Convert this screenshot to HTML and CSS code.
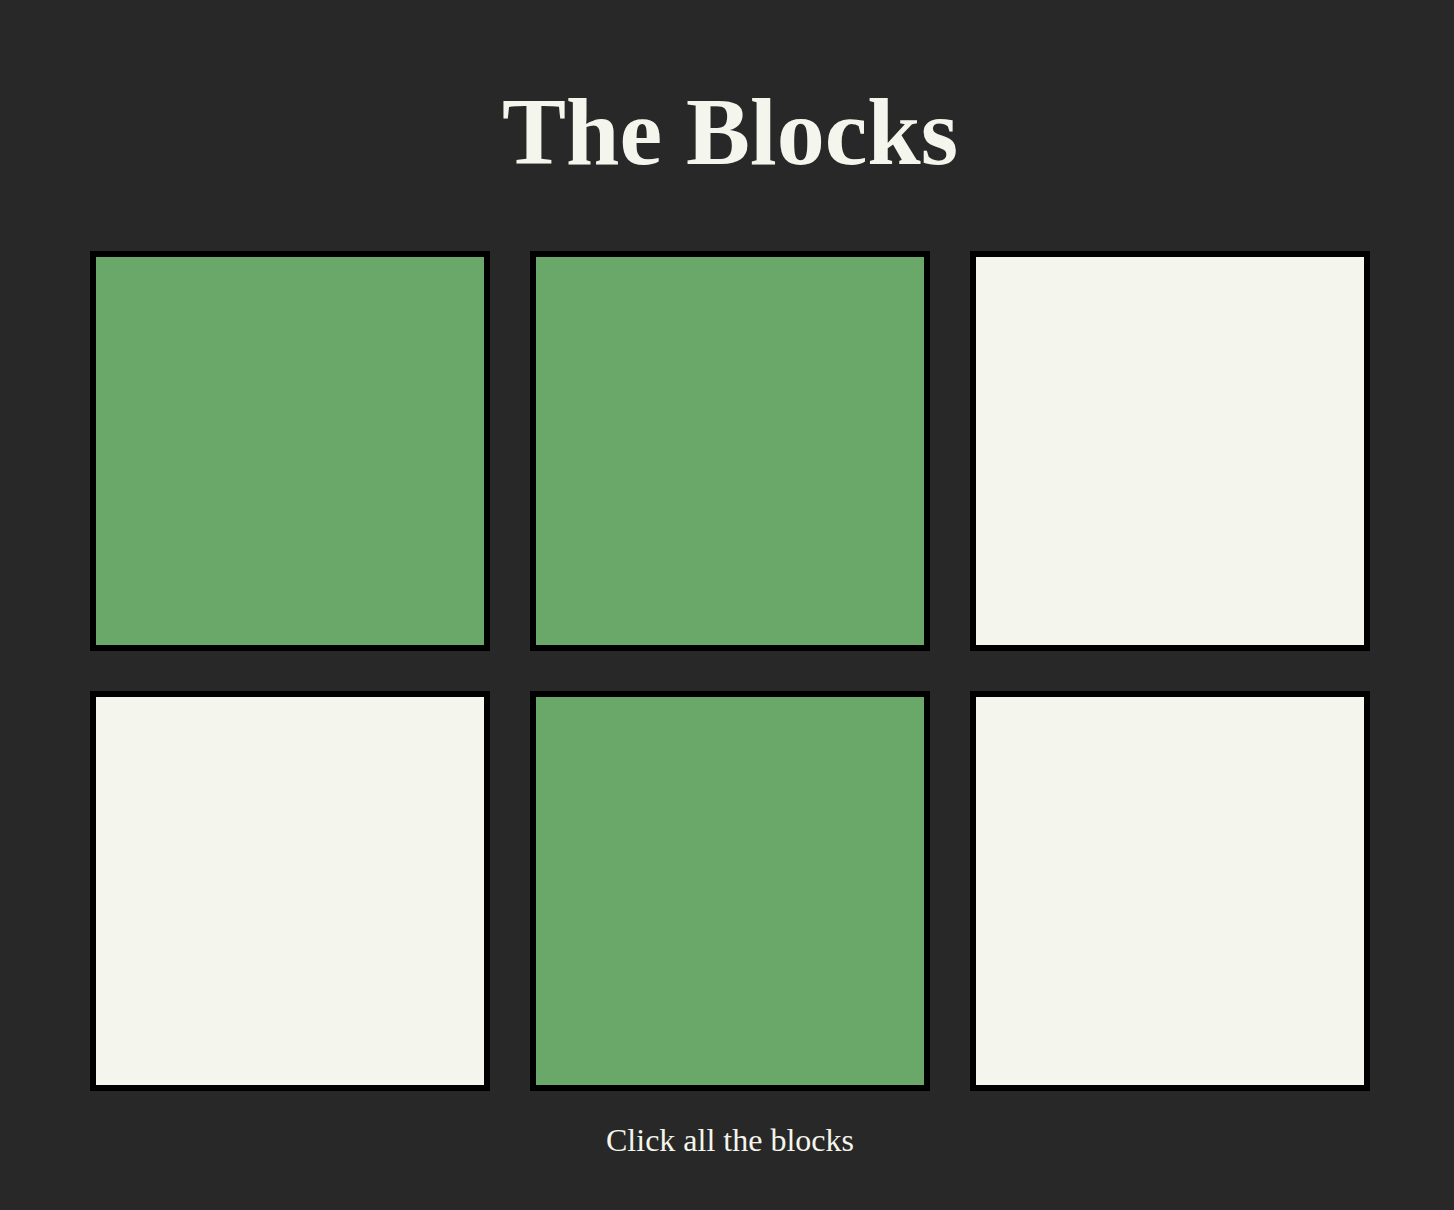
FILE: index.html
```html
<!DOCTYPE html>
<html lang="en">
<head>
<meta charset="utf-8">
<title>The Blocks</title>
<link rel="stylesheet" href="styles.css">
</head>
<body>
<main class="page">
  <h1 class="title">The Blocks</h1>
  <div class="grid">
    <div class="block on"></div>
    <div class="block on"></div>
    <div class="block"></div>
    <div class="block"></div>
    <div class="block on"></div>
    <div class="block"></div>
  </div>
  <p class="hint">Click all the blocks</p>
</main>
</body>
</html>
```
FILE: styles.css
```css
html, body {
  margin: 0;
  background: #282828;
}
body {
  font-family: "Liberation Serif", "Times New Roman", serif;
  color: #f4f5ec;
}
.page {
  padding-left: 6px;
  padding-top: 76px;
  display: flex;
  flex-direction: column;
  align-items: center;
}
.title {
  margin: 0;
  font-size: 96px;
  font-weight: bold;
  line-height: normal;
}
.grid {
  margin-top: 64px;
  display: grid;
  grid-template-columns: repeat(3, 400px);
  grid-auto-rows: 400px;
  gap: 40px;
}
.block {
  box-sizing: border-box;
  border: 6px solid #000;
  background: #f4f5ec;
}
.block.on {
  background: #6aa86a;
}
.hint {
  margin: 31px 0 0;
  font-size: 32px;
  line-height: normal;
}
```
